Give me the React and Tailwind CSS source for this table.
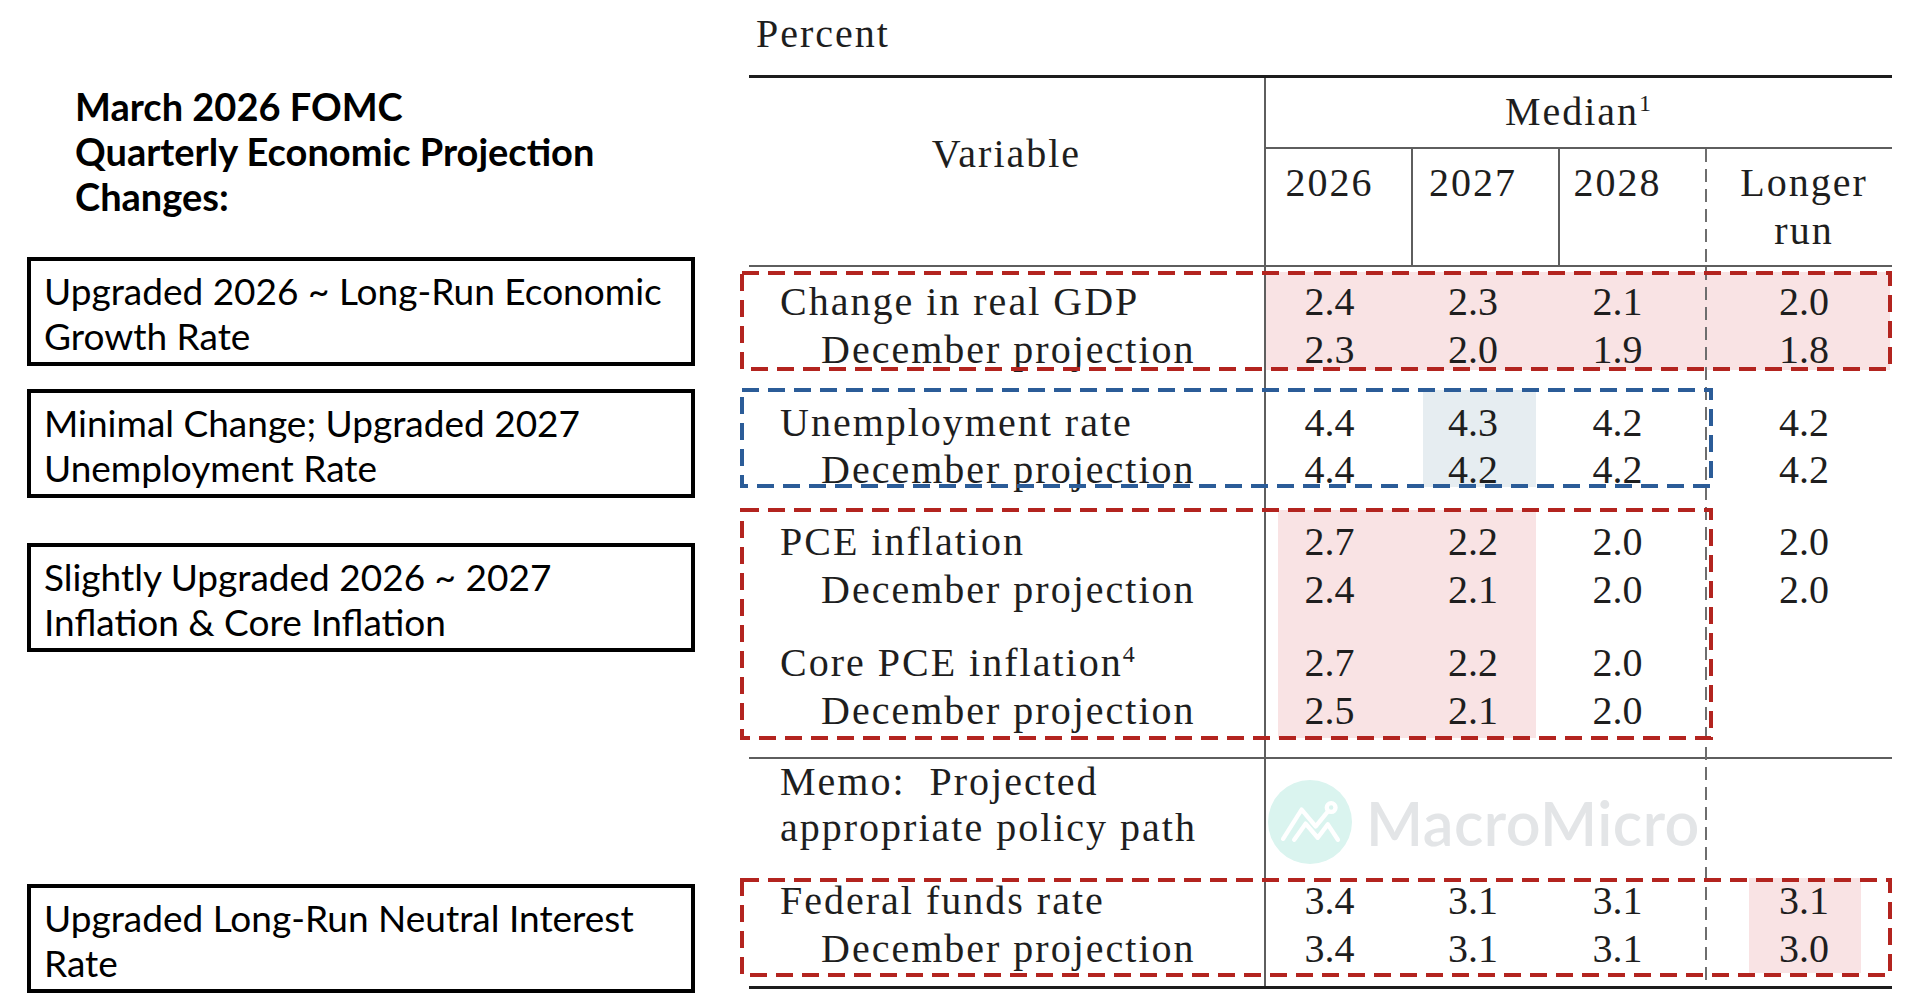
import React from 'react'

const serif = "font-['Liberation_Serif',serif]"

const rows = [
  { h: 'h-[11px]' },
  { h: 'h-[48px]', label: 'Change in real GDP', v: ['2.4', '2.3', '2.1', '2.0'] },
  { h: 'h-[48px]', label: 'December projection', sub: true, v: ['2.3', '2.0', '1.9', '1.8'] },
  { h: 'h-[25px]' },
  { h: 'h-[47px]', label: 'Unemployment rate', v: ['4.4', '4.3', '4.2', '4.2'] },
  { h: 'h-[47px]', label: 'December projection', sub: true, v: ['4.4', '4.2', '4.2', '4.2'] },
  { h: 'h-[25px]' },
  { h: 'h-[48px]', label: 'PCE inflation', v: ['2.7', '2.2', '2.0', '2.0'] },
  { h: 'h-[48px]', label: 'December projection', sub: true, v: ['2.4', '2.1', '2.0', '2.0'] },
  { h: 'h-[25px]' },
  { h: 'h-[48px]', label: <>Core PCE inflation<sup className="text-[24px] -top-[14px]">4</sup></>, v: ['2.7', '2.2', '2.0', ''] },
  { h: 'h-[48px]', label: 'December projection', sub: true, v: ['2.5', '2.1', '2.0', ''] },
  { h: 'h-[22px]' },
  { h: 'h-[2px]', rule: true },
  { h: 'h-[92px]', memo: true },
  { h: 'h-[26px]' },
  { h: 'h-[48px]', label: 'Federal funds rate', v: ['3.4', '3.1', '3.1', '3.1'] },
  { h: 'h-[48px]', label: 'December projection', sub: true, v: ['3.4', '3.1', '3.1', '3.0'] },
  { h: 'h-[13px]' },
]

// number columns: width, and the padding that puts the figures where the original has them
const cols = [
  { w: 'w-[145px]', pad: 'pr-[18px]' },
  { w: 'w-[147px]', pad: 'pr-[23px]' },
  { w: 'w-[147px]', pad: 'pr-[28px]' },
  { w: 'w-[185px]', pad: 'pl-[9px]' },
]

const changes = [
  { lines: ['Upgraded 2026 ~ Long-Run Economic', 'Growth Rate'], mt: 'mt-[38px]' },
  { lines: ['Minimal Change; Upgraded 2027', 'Unemployment Rate'], mt: 'mt-[23px]' },
  { lines: ['Slightly Upgraded 2026 ~ 2027', 'Inflation & Core Inflation'], mt: 'mt-[45px]' },
  { lines: ['Upgraded Long-Run Neutral Interest', 'Rate'], mt: 'mt-[232px]' },
]

function DashedDivider() {
  return <div className="w-[2px] self-stretch shrink-0 bg-[repeating-linear-gradient(to_bottom,#6e6e6e_0px,#6e6e6e_13px,transparent_13px,transparent_20px)]" />
}

function DashedBox({ className, w, h, color }) {
  return (
    <svg className={`absolute ${className}`} width={w} height={h}>
      <rect x="2" y="2" width={w - 4} height={h - 4} fill="none" stroke={color} strokeWidth="4" strokeDasharray="17 9" />
    </svg>
  )
}

function Watermark() {
  return (
    <div className="absolute left-[519px] top-[705px] flex items-center gap-[14px]">
      <div className="w-[84px] h-[84px] rounded-full bg-[#daf4ef] flex items-center justify-center">
        <svg width="84" height="84" viewBox="0 0 250 250" fill="none" stroke="white" strokeWidth="13" strokeLinejoin="round" strokeLinecap="round">
          <path d="M45 175 L100 88 L142 138 L176 96" />
          <circle cx="188" cy="82" r="13" />
          <path d="M78 178 L112 130 L148 172 L178 132 L208 178" />
        </svg>
      </div>
      <span className="font-['Lato',sans-serif] font-semibold text-[61px] leading-none text-[#e3e5e7] tracking-[0.5px]">MacroMicro</span>
    </div>
  )
}

function ProjectionTable() {
  return (
    <div className="relative">
      {/* highlights */}
      <div className="absolute left-[517px] top-[197px] w-[624px] h-[98px] bg-[#f9e3e4]" />
      <div className="absolute left-[674px] top-[315px] w-[113px] h-[97px] bg-[#e6edf1]" />
      <div className="absolute left-[529px] top-[435px] w-[258px] h-[228px] bg-[#f9e3e4]" />
      <div className="absolute left-[1000px] top-[803px] w-[112px] h-[95px] bg-[#f9e3e4]" />
      <Watermark />

      <div className={`relative border-t-[3px] border-b-[3px] border-[#1c1c1c] text-[40px] tracking-[0.05em] text-[#1e1e1e] ${serif}`}>
        <div className="flex border-b-2 border-[#5e5e5e]">
          <div className="w-[515px] h-[187px] pt-[52px] text-center leading-[48px]">Variable</div>
          <div className="w-[628px] border-l-2 border-[#5e5e5e]">
            <div className="h-[71px] border-b-2 border-[#5e5e5e] pt-[10px] text-center leading-[48px]">
              Median<sup className="text-[24px] -top-[14px]">1</sup>
            </div>
            <div className="flex h-[116px] leading-[48px]">
              <div className="w-[145px] pr-[18px] pt-[10px] text-center">2026</div>
              <div className="w-[147px] border-l-2 border-[#5e5e5e] pr-[25px] pt-[10px] text-center">2027</div>
              <div className="w-[147px] border-l-2 border-[#5e5e5e] pr-[30px] pt-[10px] text-center">2028</div>
              <DashedDivider />
              <div className="w-[185px] pl-[9px] pt-[10px] text-center">Longer<br />run</div>
            </div>
          </div>
        </div>

        <div className="flex">
          <div className="w-[515px]">
            {rows.map((r, i) => (
              <div key={i} className={`${r.h} ${r.rule ? 'bg-[#5e5e5e]' : ''} ${r.sub ? 'pl-[72px]' : 'pl-[31px]'} leading-[48px] whitespace-nowrap`}>
                {r.memo ? (
                  <div className="leading-[46px]">{'Memo:\u00a0 Projected'}<br />appropriate policy path</div>
                ) : r.label}
              </div>
            ))}
          </div>
          <div className="flex border-l-2 border-[#5e5e5e]">
            {cols.map((c, ci) => (
              <React.Fragment key={ci}>
                {ci === 3 && <DashedDivider />}
                <div className={c.w}>
                  {rows.map((r, i) => (
                    <div key={i} className={`${r.h} ${r.rule ? 'bg-[#5e5e5e]' : c.pad} text-center leading-[48px] tracking-normal`}>
                      {r.v ? r.v[ci] : ''}
                    </div>
                  ))}
                </div>
              </React.Fragment>
            ))}
          </div>
        </div>
      </div>

      {/* annotation boxes */}
      <DashedBox className="-left-[9px] top-[196px]" w={1152} h={100} color="#b3241f" />
      <DashedBox className="-left-[9px] top-[313px]" w={973} h={100} color="#2b5c98" />
      <DashedBox className="-left-[9px] top-[433px]" w={973} h={232} color="#b3241f" />
      <DashedBox className="-left-[9px] top-[803px]" w={1152} h={99} color="#b3241f" />
    </div>
  )
}

export default function App() {
  return (
    <div className="w-[1920px] h-[1004px] bg-white flex overflow-hidden">
      <div className="w-[749px] shrink-0 pl-[27px] pt-[84px] font-['Lato',sans-serif] text-black">
        <h1 className="ml-[48px] text-[38px] font-bold leading-[45px]">
          March 2026 FOMC<br />Quarterly Economic Projection<br />Changes:
        </h1>
        {changes.map((c, i) => (
          <div key={i} className={`${c.mt} w-[668px] border-4 border-black pl-[13px] pt-[7px] pb-[4px] text-[37px] leading-[45px]`}>
            {c.lines[0]}<br />{c.lines[1]}
          </div>
        ))}
      </div>

      <div className="w-[1143px] shrink-0 pt-[10px]">
        <div className={`pl-[7px] text-[40px] leading-[48px] tracking-[0.05em] text-[#1e1e1e] ${serif}`}>Percent</div>
        <div className="mt-[17px]">
          <ProjectionTable />
        </div>
      </div>
    </div>
  )
}
